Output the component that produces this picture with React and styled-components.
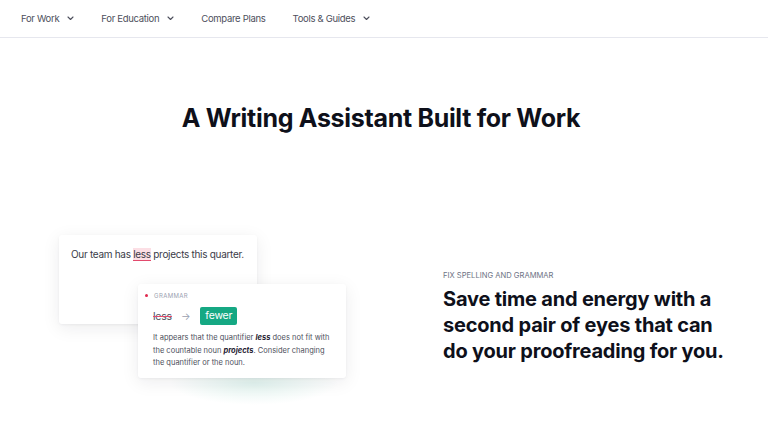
import React from 'react';
import styled, { createGlobalStyle } from 'styled-components';

const GlobalStyle = createGlobalStyle`
  html, body {
    margin: 0;
    padding: 0;
    background: #fff;
    font-family: Inter, "Noto Sans", sans-serif;
    color: #0e101a;
  }
`;

const Page = styled.div`
  width: 768px;
  height: 436px;
  overflow: hidden;
`;

const Nav = styled.nav`
  height: 37px;
  display: flex;
  align-items: center;
  gap: 27px;
  padding: 0 21px;
  border-bottom: 1px solid #e6e7ee;
`;

const NavItem = styled.a`
  display: flex;
  align-items: center;
  gap: 8px;
  font-size: 9.5px;
  letter-spacing: -0.3px;
  color: #4d4f5c;
  text-decoration: none;
`;

const Hero = styled.h1`
  margin: 64px 0 0;
  padding-right: 6px;
  text-align: center;
  font-size: 25px;
  font-weight: 700;
  letter-spacing: -0.3px;
  line-height: 32px;
`;

const Feature = styled.section`
  display: grid;
  grid-template-columns: 384px 1fr;
  align-items: center;
  margin-top: 101px;
`;

const Illustration = styled.div`
  position: relative;
  margin-left: 59px;
  width: 290px;
  height: 165px;
`;

const Card = styled.div`
  background: #fff;
  border-radius: 3px;
  box-shadow: 0 4px 18px rgba(20, 24, 40, 0.08), 0 1px 3px rgba(20, 24, 40, 0.05);
`;

const SentenceCard = styled(Card)`
  width: 198px;
  height: 89px;
  box-sizing: border-box;
  padding: 13px 12px;
  font-size: 10px;
  letter-spacing: -0.3px;
  color: #3a3c48;
`;

const Mistake = styled.span`
  background: #fcdfe5;
  border-bottom: 1px solid #e24a6d;
`;

const Glow = styled.div`
  position: absolute;
  left: 110px;
  top: 125px;
  width: 170px;
  height: 45px;
  border-radius: 50%;
  background: radial-gradient(ellipse at center, rgba(120, 200, 180, 0.22), rgba(120, 200, 180, 0) 70%);
`;

const SuggestionCard = styled(Card)`
  position: absolute;
  left: 79px;
  top: 49px;
  width: 208px;
  height: 94px;
  box-sizing: border-box;
  padding: 8px 13px 0 15px;
`;

const Tag = styled.div`
  display: flex;
  align-items: center;
  gap: 6px;
  margin-left: -8px;
  font-size: 6px;
  letter-spacing: 0.4px;
  color: #9a9fb0;
`;

const Dot = styled.span`
  width: 3px;
  height: 3px;
  border-radius: 50%;
  background: #e0294e;
`;

const Replace = styled.div`
  display: flex;
  align-items: center;
  gap: 9px;
  margin-top: 8px;
  font-size: 10.5px;
  letter-spacing: -0.2px;
`;

const Struck = styled.span`
  color: #4d4f5c;
  text-decoration: line-through;
  text-decoration-color: #e24a6d;
`;

const Arrow = styled.span`
  color: #9a9fb0;
  font-size: 10px;
`;

const Fix = styled.span`
  margin-left: 1px;
  background: #15a883;
  color: #fff;
  border-radius: 2px;
  padding: 2px 5px 3px;
`;

const Explain = styled.p`
  margin: 7px 0 0;
  font-size: 7.5px;
  line-height: 12.5px;
  color: #4d4f5c;

  b {
    font-style: italic;
    color: #1e2030;
  }
`;

const Copy = styled.div`
  padding-left: 59px;
`;

const Eyebrow = styled.div`
  font-size: 7.6px;
  color: #6e7385;
  text-transform: uppercase;
  margin-bottom: 6px;
`;

const Headline = styled.h2`
  margin: 0;
  max-width: 282px;
  font-size: 20px;
  line-height: 26px;
  font-weight: 700;
  letter-spacing: -0.2px;
`;

const Chevron = () => (
  <svg width="7" height="5" viewBox="0 0 7 5" fill="none">
    <path d="M1 1l2.5 2.5L6 1" stroke="#4d4f5c" strokeWidth="1.1" strokeLinecap="round" strokeLinejoin="round" />
  </svg>
);

export default function App() {
  return (
    <Page>
      <GlobalStyle />
      <Nav>
        <NavItem>For Work <Chevron /></NavItem>
        <NavItem>For Education <Chevron /></NavItem>
        <NavItem>Compare Plans</NavItem>
        <NavItem>Tools &amp; Guides <Chevron /></NavItem>
      </Nav>
      <Hero>A Writing Assistant Built for Work</Hero>
      <Feature>
        <Illustration>
          <SentenceCard>
            Our team has <Mistake>less</Mistake> projects this quarter.
          </SentenceCard>
          <Glow />
          <SuggestionCard>
            <Tag><Dot />GRAMMAR</Tag>
            <Replace>
              <Struck>less</Struck>
              <Arrow>→</Arrow>
              <Fix>fewer</Fix>
            </Replace>
            <Explain>
              It appears that the quantifier <b>less</b> does not fit with the countable noun <b>projects</b>. Consider changing the quantifier or the noun.
            </Explain>
          </SuggestionCard>
        </Illustration>
        <Copy>
          <Eyebrow>Fix spelling and grammar</Eyebrow>
          <Headline>Save time and energy with a second pair of eyes that can do your proofreading for you.</Headline>
        </Copy>
      </Feature>
    </Page>
  );
}
